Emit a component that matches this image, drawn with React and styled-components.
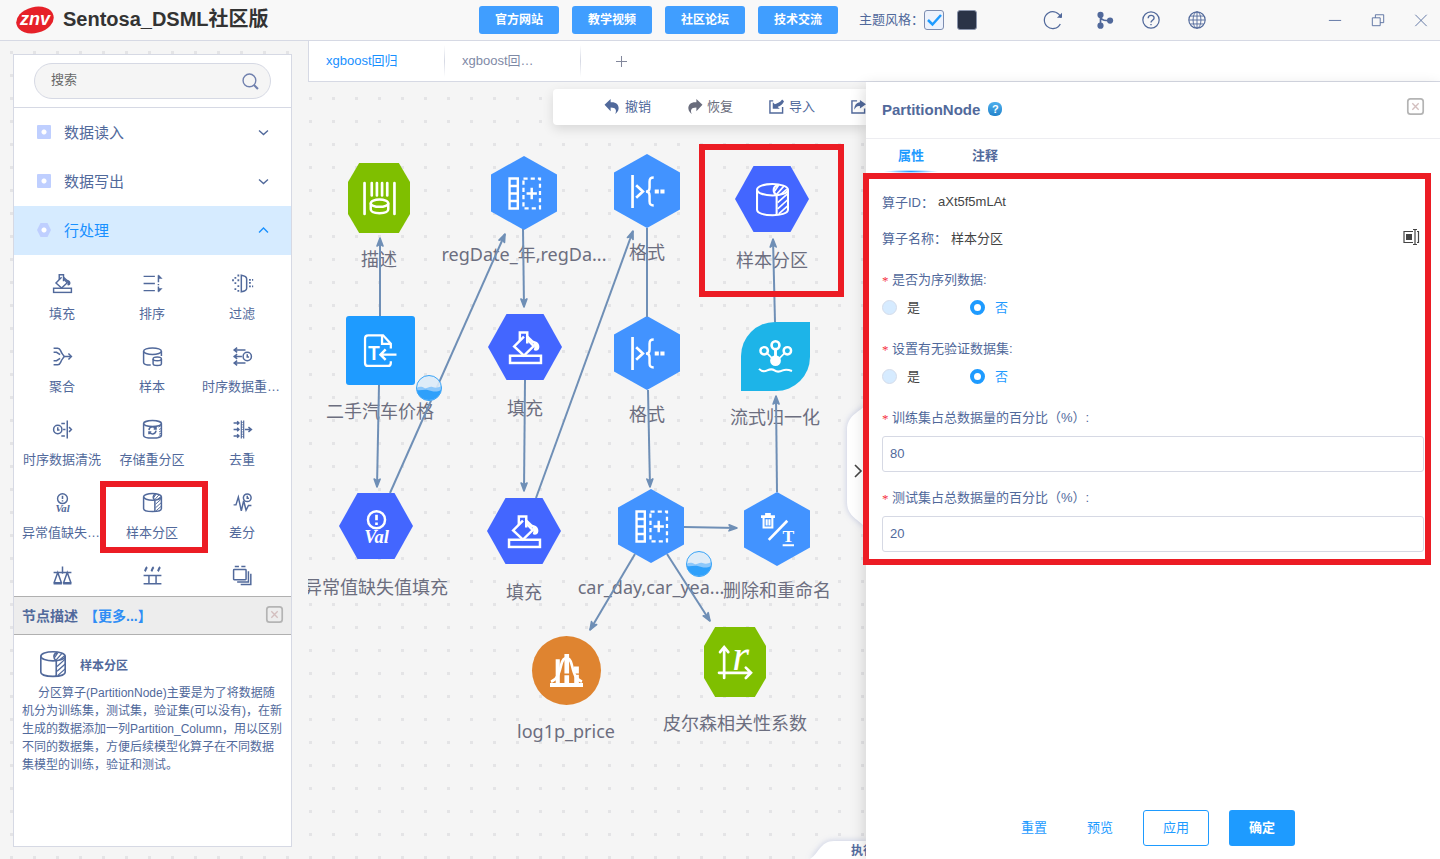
import React, { useState } from "react";
import styled, { createGlobalStyle, css } from "styled-components";

const colors = {
  text: "#51699b",
  primary: "#1e9bff",
  line: "#d6d9e4",
  canvasText: "#6c6e7f",
  mark: "#ec1c24",
  edge: "#6f8fb6",
};

const GlobalStyle = createGlobalStyle`
  * {
    box-sizing: border-box;
  }

  body {
    margin: 0;
    font-family: "Liberation Sans", "Noto Sans CJK SC", sans-serif;
    font-size: 13px;
    color: ${colors.text};
  }

  button,
  input {
    font-family: inherit;
    font-size: inherit;
    color: inherit;
  }

  button {
    padding: 0;
    border: none;
    background: none;
    cursor: pointer;
  }
`;

/* ---------- Icons ---------- */

const Glyph = styled.svg`
  display: block;
  flex: none;
  width: ${(p) => p.$size}px;
  height: ${(p) => p.$size}px;
  fill: none;
  stroke: currentColor;
  stroke-width: ${(p) => (p.$size === 19 ? 2.5 : 2)};
  overflow: visible;

  .solid {
    fill: currentColor;
    stroke: none;
  }

  text {
    fill: currentColor;
    stroke: none;
    font-family: "Liberation Serif", serif;
  }
`;

const glyphs = {
  fill: (
    <>
      <rect x="1" y="24" width="30" height="7" strokeWidth="2.4" />
      <path d="M14.5 5.5 5 15l9.5 8.8L24 14.6 17.6 8" strokeWidth="2.4" />
      <path d="M10.5 9.5V1.4h7.2V12" strokeWidth="2.4" />
      <path d="M17.8 5.5 24 11.5" strokeWidth="2.4" />
      <path className="solid" d="M22 9.5c4.5 0 8 2.5 7.4 6.5-.4 3-3.4 4-5.4 2.5 1-2.500 1-5-2-9z" />
    </>
  ),
  sort: (
    <>
      <path d="M1 4h19M1 16h19M1 28h19" />
      <path d="M26 2v12M26 17v2M26 21v9" />
      <path className="solid" d="M26 1l7 7h-7zM26 31l7-7h-7z" />
    </>
  ),
  filter: (
    <>
      <path d="M14 2v28c6-1 9-3 9-6V8c0-3-3-5-9-6z" />
      <path d="M9 1v3M9 9v3M9 19v3M9 27v3M4 5v3M4 14v3M4 24v3M0 9v3M27 10h3M27 15h3M27 21h3M32 10h2M32 21h2" strokeWidth="3" />
    </>
  ),
  merge: (
    <>
      <path d="M1 2h7c5 0 4 5 8 10l3 4h11M1 30h7c5 0 4-5 8-10l3-4M1 9h5l6 4M1 23h5l6-4" />
      <path d="M26 11l5 5-5 5" />
    </>
  ),
  sample: (
    <>
      <ellipse cx="16" cy="7" rx="15" ry="5.5" />
      <path d="M1 7v19c0 3 5 4.500 12 4.500M31 7v8" />
      <ellipse cx="24" cy="20" rx="7" ry="3" />
      <path d="M17 20v8c0 4 14 4 14 0v-8" />
    </>
  ),
  timeResample: (
    <>
      <path d="M1 5h20M1 16h14M1 27h20M7 1 2 5l5 4M7 12l-5 4 5 4M7 23l-5 4 5 4" />
      <circle cx="24" cy="16" r="7" />
      <path d="M24 12v5h3" />
    </>
  ),
  timeClean: (
    <>
      <circle cx="8" cy="16" r="7" />
      <path d="M8 12v5h3M14 6h6M17 16h4M14 27h6M24 1v30M27 12l4 4-4 4" />
    </>
  ),
  repartition: (
    <>
      <ellipse cx="16" cy="6" rx="15" ry="5" />
      <path d="M1 6v20c0 6 30 6 30 0V6" />
      <path d="M10 17c1-7 9-7 12-2M22 18c-1 7-9 7-12 2M22 11v4h-4M10 24v-4h4" />
      <path d="M26 12l5-3M27 16l4-2M27 20l4-2M27 24l4-2M26 28l5-3" strokeWidth="1.5" />
    </>
  ),
  dedupe: (
    <>
      <path d="M1 5h9M1 16h9M1 27h9M7 2l3 3-3 3M7 13l3 3-3 3M7 24l3 3-3 3" />
      <path d="M14 1v30M18 1v30" strokeWidth="2" />
      <path d="M14 4h4M14 8h4M14 12h4M14 16h4M14 20h4M14 24h4M14 28h4" strokeWidth="1.2" />
      <path d="M20 16h11M26 12l5 4-5 4" />
    </>
  ),
  val: (
    <>
      <circle cx="16" cy="9.5" r="8.300" strokeWidth="2.400" />
      <path d="M16 4.500v5.500M16 12v2.500" strokeWidth="2.600" />
      <text x="16" y="32" fontSize="18" fontStyle="italic" fontWeight="bold" textAnchor="middle">Val</text>
    </>
  ),
  partition: (
    <>
      <ellipse cx="16" cy="6.5" rx="15" ry="5.6" />
      <path d="M1 6.500v19.500c0 7 30 7 30 0V6.500M20 12v19" />
      <path d="M20 12C16 9 16 4 21 2" />
      <path d="M18 8l4-6M20 11l7-8M21 19l10-9M21 25l10-9M22 30l9-8M24 11l6-5" strokeWidth="1.6" />
    </>
  ),
  diff: (
    <>
      <path d="M1 20h4l4-13 5 23 4-17 4 16 4-8h5" />
      <circle cx="24" cy="8" r="6.5" />
      <path d="M24 4.500V9h3" />
    </>
  ),
  balance: <path d="M16 1v12M1 11h30M8 11 2 28h12zM24 11l-6 17h12zM1 30h14M17 30h14" />,
  split: (
    <>
      <path d="M1 16h30M1 30h30M10 16v14M22 16v14" />
      <path d="M3 9c2-2 1-5 4-7M14 9c2-2 1-5 4-7M25 9c2-2 1-5 4-7" strokeWidth="3.6" />
    </>
  ),
  stack: (
    <>
      <rect x="1" y="6" width="21" height="17" rx="1" />
      <path d="M26 9v18H7M30 13v18H13M3 1h7M14 1h7" />
    </>
  ),
  describe: (
    <>
      <path d="M1.5 1v30M30.5 1v30M8.500 1v12M13.500 1v12M18.500 1v12M23.500 1v12" strokeWidth="2.600" strokeLinecap="round" />
      <ellipse cx="16" cy="20.5" rx="8.5" ry="3.6" strokeWidth="2.4" />
      <path d="M7.500 20.500v6c0 5 17 5 17 0v-6" strokeWidth="2.4" />
    </>
  ),
  columns: (
    <>
      <path d="M1.500 1.500h8v29h-8zM1.500 8.700h8M1.500 16h8M1.500 23.300h8" strokeWidth="2.300" />
      <rect x="15" y="1.5" width="16" height="29" strokeWidth="2.2" strokeDasharray="4 3" />
      <path d="M18 16h10M23 10.500v11" strokeWidth="2.400" />
    </>
  ),
  format: (
    <>
      <path d="M1.500 0v32" strokeWidth="2.6" />
      <path d="M5 10l6.500 6L5 22" strokeWidth="2.6" />
      <path d="M22 2.500c-3.500 0-4 1.500-4 4V12c0 2.500-1 4-3.500 4 2.500 0 3.500 1.500 3.500 4v5.500c0 2.500.5 4 4 4" strokeWidth="2.4" />
      <path className="solid" d="M23 14h4v4h-4zM28.500 14h4v4h-4z" />
    </>
  ),
  textFile: (
    <>
      <path d="M26 14V9.500L18.500 1.300H4c-2 0-3 1-3 3V28c0 2 1 3 3 3h19c2 0 3-1 3-3v-1.500" strokeWidth="2.2" />
      <path d="M17.500 1.500V9.500H26" strokeWidth="2.2" />
      <path d="M31.500 20H16.500M21 15l-5 5 5 5" strokeWidth="2.4" />
      <text x="9.5" y="25" fontSize="19" textAnchor="middle" fontWeight="bold" style={{ fontFamily: "Lato" }}>T</text>
    </>
  ),
  stream: (
    <>
      <circle cx="5" cy="10.5" r="3.6" strokeWidth="2.4" />
      <circle cx="16" cy="5" r="3.8" strokeWidth="2.6" />
      <circle cx="27.5" cy="10.5" r="3.6" strokeWidth="2.4" />
      <path d="M8 13l5 5M24.500 13l-5 5" strokeWidth="1.6" />
      <path d="M16 9v9" strokeWidth="2.8" />
      <circle className="solid" cx="16" cy="20" r="5.2" />
      <path d="M0 28c3 3 5 3 8 1.500s5-1.500 7 0 5 1.500 8 0 5-1 9 .5" strokeWidth="2" />
    </>
  ),
  rename: (
    <>
      <path d="M0 3.500h13.500M4 1.200h5.500" strokeWidth="2.600" />
      <path d="M2.500 4v10h8.500V4M5.500 6v6M8.200 6v6" strokeWidth="2" />
      <path d="M7.500 26 25.500 7.500" strokeWidth="2.6" />
      <text x="26.5" y="28.5" fontSize="17" fontWeight="bold" textAnchor="middle">T</text>
      <path d="M21 31.300h11" strokeWidth="2" />
    </>
  ),
  histogram: (
    <>
      <path d="M0 30h32" strokeWidth="4" />
      <path className="solid" d="M5.500 5h4v24h-4zM14 0h4.500v19H14zM14 20.500h4.500V29H14zM23 12h5v7h-5zM23.500 20h4.500v9h-4.500z" />
      <path d="M1 27c7-3 8-9 10-17 1-4 2.500-6 5-6s4 2 5 6c2 8 3 14 10 17" strokeWidth="2.6" />
    </>
  ),
  pearson: (
    <>
      <path d="M5 31V2M0 26h31M1 6l4-5 4 5M26 21l5 5-5 5" strokeWidth="2.6" strokeLinecap="round" />
      <text x="21" y="23" fontSize="42" fontStyle="italic" textAnchor="middle">r</text>
    </>
  ),
  undo: <path className="solid" d="M12 0v7c11-1 18 5 17 14-.5 5-4 9-7 11 3-8 2-14-10-14v8L-1 12z" />,
  redo: <path className="solid" d="M20 0v7C9 6 2 12 3 21c.5 5 4 9 7 11-3-8-2-14 10-14v8l13-14z" />,
  importFile: (
    <>
      <path d="M9 4H2v26h27V17" strokeWidth="3" />
      <path className="solid" d="M8 21V7l4.500 4C17 9 25 7 28 1l4 4c-3 8-9 10-13.500 12L23 21z" />
    </>
  ),
  exportFile: (
    <>
      <path d="M13 4H2v26h27V20" strokeWidth="3" />
      <path className="solid" d="M19 2l13 9-13 9v-5c-6-1-9 3-12 8 0-9 4-15 12-16z" />
    </>
  ),
  search: (
    <>
      <circle cx="14" cy="14" r="12" strokeWidth="2.6" />
      <path d="M22.500 22.500 30 30" strokeWidth="4" />
    </>
  ),
  refresh: (
    <>
      <path d="M30 12A15 15 0 1 0 29 23" strokeWidth="2.2" />
      <path className="solid" d="M32 3v9H23z" />
    </>
  ),
  branch: (
    <>
      <g className="solid">
        <circle cx="8" cy="7" r="5.5" />
        <circle cx="8" cy="26" r="5.5" />
        <circle cx="25" cy="17" r="5.5" />
      </g>
      <path d="M8 7v19M8 12c3 5 8 5 17 5" strokeWidth="3" />
    </>
  ),
  help: (
    <>
      <circle cx="16" cy="16" r="14.5" strokeWidth="2.2" />
      <path d="M11 13c0-7 10.500-7 10.500-.5 0 4-5.500 4-5.500 8M16 23v2.500" strokeWidth="2.4" />
    </>
  ),
  globe: (
    <>
      <circle cx="16" cy="16" r="14.5" />
      <ellipse cx="16" cy="16" rx="7" ry="14.5" strokeWidth="1.6" />
      <path d="M16 1.500v29M1.500 16h29M4 9h24M4 23h24" strokeWidth="1.6" />
    </>
  ),
  minimize: <path d="M2 17h28" />,
  restore: <path d="M3 11h18v18H3zM10 11V4h19v18h-8" />,
  close: <path d="M3 4l26 26M29 4 3 30" />,
  boxClose: (
    <>
      <rect x="1.5" y="1.5" width="29" height="29" rx="5" stroke="#b4b4b4" strokeWidth="3.2" />
      <path d="M10 10l12 12M22 10 10 22" stroke="#d3bfbf" strokeWidth="2.6" />
    </>
  ),
  down: <path d="M3 10l13 12 13-12" strokeWidth="4" />,
  up: <path d="M3 22 16 9l13 13" strokeWidth="4" />,
  plus: <path d="M0 16h32M16 0v32" strokeWidth="3" />,
  check: <path d="M4 16l9 9L30 6" strokeWidth="5" />,
  edit: (
    <>
      <path d="M20 5H2v22h18M28 5h3v22h-3M20 1h8M24 1v30M20 31h8" strokeWidth="2.4" />
      <path className="solid" d="M6 10h12v12H6z" />
    </>
  ),
};

const Icon = ({ name, size = 20 }) => (
  <Glyph viewBox="0 0 32 32" $size={size} aria-hidden="true">
    {glyphs[name]}
  </Glyph>
);

const Logo = () => (
  <svg width="38" height="30" viewBox="0 0 38 30" role="img" aria-label="znv">
    <ellipse cx="19" cy="15" rx="19" ry="13" fill="#e62129" transform="rotate(-14 19 15)" />
    <text x="19" y="20" fill="#fff" fontFamily="Liberation Sans" fontSize="18" fontWeight="bold" fontStyle="italic" textAnchor="middle">
      znv
    </text>
  </svg>
);

/* ---------- Header ---------- */

const Page = styled.div`
  display: flex;
  flex-direction: column;
  height: 100vh;
  overflow: hidden;
`;

const Header = styled.header`
  display: flex;
  align-items: center;
  flex: none;
  height: 41px;
  padding: 0 12px 0 16px;
  background: #f8f8f8;
  border-bottom: 1px solid ${colors.line};
`;

const Brand = styled.div`
  display: flex;
  align-items: center;
  gap: 9px;
  flex: 0 0 463px;
`;

const BrandName = styled.h1`
  margin: 0;
  padding-bottom: 2px;
  font-size: 20px;
  line-height: 24px;
  color: #333;
`;

const HeaderNav = styled.nav`
  display: flex;
  gap: 13px;
`;

const HeaderLink = styled.a`
  width: 80px;
  border-radius: 3px;
  background: #409eff;
  color: #fff;
  font-size: 12px;
  font-weight: bold;
  line-height: 28px;
  text-align: center;
  text-decoration: none;
`;

const ThemePicker = styled.div`
  display: flex;
  align-items: center;
  margin-left: 21px;

  > span {
    padding-bottom: 3px;
  }
`;

const Swatch = styled.label`
  display: grid;
  place-items: center;
  margin-right: 13px;
  color: ${colors.primary};

  input {
    grid-area: 1 / 1;
    appearance: none;
    width: 20px;
    height: 20px;
    margin: 0;
    border: 1px solid ${(p) => (p.$dark ? "#8a94ab" : "#7d8db0")};
    border-radius: 3px;
    background: ${(p) => (p.$dark ? "#2a3347" : "#edf2fc")};
  }

  svg {
    grid-area: 1 / 1;
    pointer-events: none;
  }
`;

const Tools = styled.div`
  display: flex;
  align-items: center;
  gap: 28px;
  margin-left: ${(p) => (p.$end ? "auto" : "34px")};
`;

const WindowControls = styled.div`
  display: flex;
  align-items: center;
  gap: 29px;
  margin-left: 122px;
`;

/* ---------- Workspace ---------- */

const Workspace = styled.main`
  display: flex;
  flex: 1;
  min-height: 0;
  background: #f5f5f5 radial-gradient(circle, #e4e4e6 1px, #e4e4e6 1.5px, transparent 2px) 0 0 / 23px 23px;
`;

const Sidebar = styled.aside`
  display: flex;
  flex-direction: column;
  flex: 0 0 279px;
  margin: 13px 16px 12px 13px;
  border: 1px solid ${colors.line};
  background: #fff;
`;

const SearchArea = styled.div`
  padding: 8px 20px;
  border-bottom: 1px solid ${colors.line};
`;

const SearchBox = styled.label`
  display: flex;
  align-items: center;
  height: 36px;
  padding: 0 11px 0 16px;
  border: 1px solid ${colors.line};
  border-radius: 18px;
  background: #f5f5f5;
  color: #7080ae;

  input {
    flex: 1;
    min-width: 0;
    padding: 0 0 3px;
    border: none;
    outline: none;
    background: none;
  }

  input::placeholder {
    color: #686868;
    opacity: 1;
  }
`;

const Category = styled.button`
  display: flex;
  align-items: center;
  gap: 13px;
  flex: none;
  width: 100%;
  height: 49px;
  padding: 0 22px 1px 23px;
  font-size: 15px;
  color: ${(p) => (p.$open ? "#1890ff" : colors.text)};
  background: ${(p) => (p.$open ? "#d6ebff" : "#fff")};

  span {
    flex: 1;
    padding-bottom: 2px;
    text-align: left;
  }
`;

const CategoryMark = styled.i`
  width: 14px;
  height: 14px;
  border-radius: 1px;
  background: radial-gradient(circle, #fff 2px, #bfcfff 3px);
  clip-path: ${(p) => (p.$hex ? "polygon(25% 0, 75% 0, 100% 50%, 75% 100%, 25% 100%, 0 50%)" : "none")};
`;

const Operators = styled.div`
  display: grid;
  grid-template-columns: repeat(3, 1fr);
  grid-auto-rows: 49px;
  row-gap: 24px;
  flex: 1;
  min-height: 0;
  padding: 19px 4px 0 3px;
  overflow: hidden;
`;

const Operator = styled.button`
  display: flex;
  flex-direction: column;
  align-items: center;
  gap: 12px;
  position: relative;

  span {
    max-width: 80px;
    overflow: hidden;
    line-height: 18px;
    text-overflow: ellipsis;
    white-space: nowrap;
  }

  ${(p) =>
    p.$marked &&
    css`
      &::after {
        content: "";
        position: absolute;
        inset: -12px -11px -11px -7px;
        border: 6px solid ${colors.mark};
      }
    `}
`;

const Description = styled.section`
  flex: 0 0 250px;
`;

const DescriptionHead = styled.div`
  display: flex;
  align-items: center;
  gap: 6px;
  height: 39px;
  padding: 0 8px 2px;
  border: solid #b0b0b0;
  border-width: 1px 0;
  background: #ededed;
  font-size: 14px;
  font-weight: bold;

  a {
    flex: 1;
    color: #2f8df5;
    text-decoration: none;
  }
`;

const DescriptionTitle = styled.h2`
  display: flex;
  align-items: center;
  gap: 14px;
  height: 26px;
  margin: 16px 0 7px 26px;
  font-size: 12px;
`;

const DescriptionText = styled.p`
  margin: 0;
  padding: 0 8px;
  font-size: 12px;
  line-height: 18px;
  text-indent: 16px;
`;

const Content = styled.div`
  display: flex;
  flex-direction: column;
  flex: 1;
  min-width: 0;
`;

const TabBar = styled.nav`
  display: flex;
  flex: none;
  height: 41px;
  border: solid ${colors.line};
  border-width: 0 0 1px 1px;
  background: #fff;
`;

const FlowTab = styled.button`
  width: 136px;
  padding: 0 43px 3px 17px;
  color: ${(p) => (p.$active ? "#1890ff" : "#7f8aa6")};
  background: linear-gradient(transparent, ${colors.line}, transparent) right 4px / 1px 32px no-repeat;
  overflow: hidden;
  text-align: left;
  text-overflow: ellipsis;
  white-space: nowrap;
`;

const AddTab = styled.button`
  display: grid;
  place-items: center;
  width: 81px;
  color: #82879b;
`;

const Split = styled.div`
  display: flex;
  flex: 1;
  min-height: 0;
`;

/* ---------- Canvas ---------- */

const Canvas = styled.section`
  position: relative;
  flex: 1;
  min-width: 0;
  overflow: hidden;
`;

const Toolbar = styled.div`
  position: absolute;
  top: 7px;
  right: 0;
  left: 245px;
  display: flex;
  gap: 36px;
  height: 36px;
  padding: 0 0 2px 52px;
  border-radius: 4px 0 0 4px;
  background: #fff;
  box-shadow: 0 4px 12px rgba(0, 0, 0, 0.12);
`;

const ToolbarButton = styled.button`
  display: flex;
  align-items: center;
  gap: 5px;
  flex: none;
  color: ${(p) => (p.$muted ? "#696c7c" : colors.text)};

  span {
    padding-bottom: 2px;
  }
`;

const Edges = styled.svg`
  position: absolute;
  inset: 0;
  width: 100%;
  height: 100%;
  pointer-events: none;
`;

const shapes = {
  octagon: css`
    width: 62px;
    height: 70px;
    background: #7fbf00;
    clip-path: polygon(18% 0, 82% 0, 100% 27%, 100% 73%, 82% 100%, 18% 100%, 0 73%, 0 27%);
  `,
  pointy: css`
    width: 66px;
    height: 74px;
    background: #4293ff;
    clip-path: polygon(50% 0, 100% 25%, 100% 75%, 50% 100%, 0 75%, 0 25%);
  `,
  flat: css`
    width: 74px;
    height: 66px;
    background: #4366ff;
    clip-path: polygon(25% 0, 75% 0, 100% 50%, 75% 100%, 25% 100%, 0 50%);
  `,
  square: css`
    width: 69px;
    height: 69px;
    border-radius: 3px;
    background: #1e9bff;
  `,
  leaf: css`
    width: 69px;
    height: 69px;
    border-radius: 34px 0 34px 0;
    background: #1db4e8;
  `,
  circle: css`
    width: 69px;
    height: 69px;
    border-radius: 50%;
    background: #df8430;
  `,
};

const NodeBox = styled.div`
  position: absolute;
  top: ${(p) => p.$y}px;
  left: ${(p) => p.$x}px;
  display: flex;
  flex-direction: column;
  align-items: center;
  width: 0;
  transform: translateY(-37px);
  color: ${colors.canvasText};
  font-family: "Noto Sans", "Noto Sans CJK SC", sans-serif;
  font-size: 18px;
  line-height: 26px;
  white-space: nowrap;
`;

const NodeFace = styled.div`
  display: grid;
  place-items: center;
  height: 74px;
  margin-bottom: 11px;
`;

const NodeShape = styled.div`
  display: grid;
  place-items: center;
  color: #fff;
  ${(p) => shapes[p.$shape]}
`;

const Mark = styled.div`
  position: absolute;
  top: 62px;
  left: 391px;
  width: 145px;
  height: 153px;
  border: 6px solid ${colors.mark};
`;

const PanelHandle = styled.button`
  position: absolute;
  top: 321px;
  right: 0;
  width: 19px;
  height: 130px;

  svg {
    display: block;
    overflow: visible;
    filter: drop-shadow(0 0 3px rgba(80, 100, 180, 0.3));
  }
`;

const RunTab = styled.div`
  position: absolute;
  right: 0;
  bottom: 0;
  display: grid;
  width: 56px;
  height: 18px;
  overflow: visible;
  font-size: 12px;
  font-weight: bold;

  svg {
    grid-area: 1 / 1;
    filter: drop-shadow(0 0 3px rgba(80, 100, 180, 0.3));
  }

  span {
    grid-area: 1 / 1;
    z-index: 1;
    padding-left: 41px;
    line-height: 21px;
    white-space: nowrap;
  }
`;

// node centres, measured from the canvas corner
const nodes = [
  { x: 71, y: 116, shape: "octagon", icon: "describe", label: "描述" },
  { x: 216, y: 111, shape: "pointy", icon: "columns", label: "regDate_年,regDa..." },
  { x: 339, y: 109, shape: "pointy", icon: "format", label: "格式" },
  { x: 464, y: 117, shape: "flat", icon: "partition", label: "样本分区" },
  { x: 72, y: 268, shape: "square", icon: "textFile", label: "二手汽车价格" },
  { x: 217, y: 265, shape: "flat", icon: "fill", label: "填充" },
  { x: 339, y: 271, shape: "pointy", icon: "format", label: "格式" },
  { x: 467, y: 274, shape: "leaf", icon: "stream", label: "流式归一化" },
  { x: 68, y: 444, shape: "flat", icon: "val", label: "异常值缺失值填充" },
  { x: 216, y: 449, shape: "flat", icon: "fill", label: "填充" },
  { x: 343, y: 444, shape: "pointy", icon: "columns", label: "car_day,car_yea..." },
  { x: 469, y: 447, shape: "pointy", icon: "rename", label: "删除和重命名" },
  { x: 258, y: 588, shape: "circle", icon: "histogram", label: "log1p_price" },
  { x: 427, y: 580, shape: "octagon", icon: "pearson", label: "皮尔森相关性系数" },
];

const edges = [
  [72, 234, 72, 156],
  [71, 303, 69, 405],
  [82, 411, 197, 152],
  [215, 147, 216, 225],
  [217, 298, 216, 409],
  [228, 416, 325, 149],
  [340, 308, 342, 405],
  [376, 445, 429, 446],
  [327, 472, 282, 548],
  [359, 472, 402, 539],
  [469, 410, 468, 314],
  [467, 240, 465, 157],
];

const waves = [
  [121, 306],
  [391, 482],
];

const FlowCanvas = () => (
  <Canvas>
    {nodes.map((n, i) => (
      <NodeBox key={i} $x={n.x} $y={n.y}>
        <NodeFace>
          <NodeShape $shape={n.shape}>
            <Icon name={n.icon} size={33} />
          </NodeShape>
        </NodeFace>
        {n.label}
      </NodeBox>
    ))}
    <Edges aria-hidden="true">
      <defs>
        <marker id="arrow" viewBox="0 0 12 10" refX="10" refY="5" markerWidth="12" markerHeight="10" markerUnits="userSpaceOnUse" orient="auto">
          <path d="M2 2l8 3-8 3 2-3z" fill={colors.edge} stroke={colors.edge} strokeWidth="1.6" strokeLinejoin="round" />
        </marker>
      </defs>
      <g stroke={colors.edge} strokeWidth="2">
        <path d="M339 146v89" />
        {edges.map(([x1, y1, x2, y2], i) => (
          <line key={i} x1={x1} y1={y1} x2={x2} y2={y2} markerEnd="url(#arrow)" />
        ))}
      </g>
      {waves.map(([x, y]) => (
        <g key={x} transform={`translate(${x} ${y})`}>
          <circle r="12.5" fill="#dcebf8" fillOpacity=".9" />
          <path d="M-12.500 0c3-2 6-1 8 0s5-2 8-1 5 1 9-1a12.500 12.500 0 0 1-25 4z" fill="#8cc8fb" />
          <path d="M-12.300 2c4 1 7-1 11 0s8 3 13.500 0a12.500 12.500 0 0 1-24.500 0z" fill="#2ea0fb" />
          <circle r="12.5" fill="none" stroke="#3aa4f7" />
        </g>
      ))}
    </Edges>
    <Mark />
    <Toolbar>
      <ToolbarButton><Icon name="undo" size={15} /><span>撤销</span></ToolbarButton>
      <ToolbarButton $muted><Icon name="redo" size={15} /><span>恢复</span></ToolbarButton>
      <ToolbarButton><Icon name="importFile" size={15} /><span>导入</span></ToolbarButton>
      <ToolbarButton aria-label="导出"><Icon name="exportFile" size={15} /></ToolbarButton>
    </Toolbar>
    <PanelHandle aria-label="收起">
      <svg width="19" height="130" viewBox="0 0 19 130">
        <path d="M19 0C17 8 0 10 0 27v72c0 17 17 19 19 28z" fill="#fff" />
        <path d="M8 62l6 6-6 6" fill="none" stroke="#444" strokeWidth="1.6" />
      </svg>
    </PanelHandle>
    <RunTab>
      <svg width="56" height="18" viewBox="0 0 56 18">
        <path d="M0 18C8 14 10 0 24 0h32v18z" fill="#fff" />
      </svg>
      <span>执行</span>
    </RunTab>
  </Canvas>
);

/* ---------- Property panel ---------- */

const Panel = styled.form`
  position: relative;
  display: flex;
  flex-direction: column;
  flex: 0 0 574px;
  background: #fff;
  box-shadow: -2px 4px 14px rgba(0, 0, 0, 0.14);
`;

const PanelHead = styled.div`
  display: flex;
  align-items: center;
  gap: 8px;
  height: 57px;
  padding: 0 16px 2px;
  border-bottom: 1px solid #ededf1;

  h2 {
    margin: 0;
    font-size: 15px;
  }
`;

const HelpBadge = styled.button`
  width: 14px;
  height: 14px;
  border-radius: 6px;
  background: linear-gradient(#4fb0ee, #2283cb);
  color: #fff;
  font-size: 11px;
  font-weight: bold;
  line-height: 14px;
`;

const PanelClose = styled.button`
  margin: 0 0 6px auto;
`;

const PanelTabs = styled.div`
  display: flex;
  height: 34px;
  padding-left: 8px;
`;

const PanelTab = styled.button`
  width: 74px;
  padding-bottom: 3px;
  font-weight: bold;
  color: ${(p) => (p.$active ? colors.primary : colors.text)};
  background: ${(p) =>
    p.$active
      ? `radial-gradient(closest-side, ${colors.primary}, transparent) center 31px / 54px 3px no-repeat`
      : "none"};
`;

const FormBody = styled.div`
  position: relative;
  padding: 10px 16px 13px;

  &::after {
    content: "";
    position: absolute;
    inset: 0 9px 0 -3px;
    border: 6px solid ${colors.mark};
    pointer-events: none;
  }
`;

const InfoRow = styled.div`
  display: flex;
  align-items: center;
  gap: 4px;
  height: 36px;

  output {
    flex: 1;
    color: #444;
  }

  button {
    margin-right: 5px;
    color: #444;
  }
`;

const Field = styled.fieldset`
  margin: 0;
  padding: ${(p) => (p.$radio ? "0 0 24px" : "0 0 17px")};
  border: none;

  &:first-of-type {
    margin-top: 16px;
  }

  &:last-of-type {
    padding-bottom: 0;
  }
`;

const FieldLabel = styled.label`
  display: block;
  margin-bottom: 9px;
  padding: 0;
  line-height: 18px;

  &::before {
    content: "*";
    display: inline-block;
    width: 10px;
    color: #f5333f;
    font-family: "Liberation Serif", serif;
    vertical-align: -1px;
    line-height: 1;
  }
`;

const Options = styled.div`
  display: flex;
  height: 18px;
`;

const Option = styled.label`
  display: flex;
  align-items: center;
  gap: 10px;
  width: 88px;
  color: ${(p) => (p.$on ? colors.primary : "#444")};

  input {
    appearance: none;
    width: 15px;
    height: 15px;
    margin: 0;
    border: 1px solid #d5dcea;
    border-radius: 50%;
    background: #d6ebff;
  }

  input:checked {
    border: 4px solid ${colors.primary};
    background: #fff;
  }

  span {
    padding-bottom: 2px;
  }
`;

const TextInput = styled.input`
  display: block;
  width: 100%;
  height: 36px;
  padding: 0 7px 1px;
  border: 1px solid ${colors.line};
  border-radius: 3px;
  outline: none;
`;

const PanelFoot = styled.div`
  display: flex;
  justify-content: center;
  margin-top: auto;
  padding: 0 10px 13px 0;
`;

const FootButton = styled.button`
  width: 66px;
  height: 36px;
  padding-bottom: 3px;
  border-radius: 3px;
  color: ${colors.primary};

  ${(p) =>
    p.$outlined &&
    css`
      margin: 0 20px 0 10px;
      border: 1px solid ${colors.primary};
    `}

  ${(p) =>
    p.$filled &&
    css`
      background: ${colors.primary};
      color: #fff;
      font-weight: bold;
    `}
`;

const RadioField = ({ name, title }) => {
  const [value, setValue] = useState("否");
  return (
    <Field $radio>
      <FieldLabel as="legend">{title}</FieldLabel>
      <Options>
        {["是", "否"].map((option) => (
          <Option key={option} $on={value === option}>
            <input type="radio" name={name} checked={value === option} onChange={() => setValue(option)} />
            <span>{option}</span>
          </Option>
        ))}
      </Options>
    </Field>
  );
};

const NumberField = ({ id, title, value }) => (
  <Field>
    <FieldLabel htmlFor={id}>{title}</FieldLabel>
    <TextInput id={id} defaultValue={value} />
  </Field>
);

const PropertyPanel = () => (
  <Panel onSubmit={(e) => e.preventDefault()}>
    <PanelHead>
      <h2>PartitionNode</h2>
      <HelpBadge type="button">?</HelpBadge>
      <PanelClose type="button" aria-label="关闭">
        <Icon name="boxClose" size={17} />
      </PanelClose>
    </PanelHead>
    <PanelTabs>
      <PanelTab type="button" $active>属性</PanelTab>
      <PanelTab type="button">注释</PanelTab>
    </PanelTabs>
    <FormBody>
      <InfoRow>
        算子ID：<output>aXt5f5mLAt</output>
      </InfoRow>
      <InfoRow>
        算子名称：<output>样本分区</output>
        <button type="button" aria-label="重命名">
          <Icon name="edit" size={16} />
        </button>
      </InfoRow>
      <RadioField name="sequence" title="是否为序列数据:" />
      <RadioField name="validation" title="设置有无验证数据集:" />
      <NumberField id="train" title="训练集占总数据量的百分比（%）:" value="80" />
      <NumberField id="test" title="测试集占总数据量的百分比（%）:" value="20" />
    </FormBody>
    <PanelFoot>
      <FootButton type="reset">重置</FootButton>
      <FootButton type="button">预览</FootButton>
      <FootButton type="button" $outlined>应用</FootButton>
      <FootButton type="submit" $filled>确定</FootButton>
    </PanelFoot>
  </Panel>
);

/* ---------- Sidebar ---------- */

const operators = [
  ["fill", "填充"],
  ["sort", "排序"],
  ["filter", "过滤"],
  ["merge", "聚合"],
  ["sample", "样本"],
  ["timeResample", "时序数据重采样"],
  ["timeClean", "时序数据清洗"],
  ["repartition", "存储重分区"],
  ["dedupe", "去重"],
  ["val", "异常值缺失值填充"],
  ["partition", "样本分区"],
  ["diff", "差分"],
  ["balance"],
  ["split"],
  ["stack"],
];

const OperatorSidebar = () => (
  <Sidebar>
    <SearchArea>
      <SearchBox>
        <input type="text" placeholder="搜索" aria-label="搜索" />
        <Icon name="search" size={17} />
      </SearchBox>
    </SearchArea>
    <Category>
      <CategoryMark />
      <span>数据读入</span>
      <Icon name="down" size={11} />
    </Category>
    <Category>
      <CategoryMark />
      <span>数据写出</span>
      <Icon name="down" size={11} />
    </Category>
    <Category $open>
      <CategoryMark $hex />
      <span>行处理</span>
      <Icon name="up" size={11} />
    </Category>
    <Operators>
      {operators.map(([icon, label]) => (
        <Operator key={icon} $marked={icon === "partition"} aria-label={label || icon}>
          <Icon name={icon} size={19} />
          {label && <span>{label}</span>}
        </Operator>
      ))}
    </Operators>
    <Description>
      <DescriptionHead>
        节点描述<a href="#more">【更多...】</a>
        <button aria-label="关闭">
          <Icon name="boxClose" size={17} />
        </button>
      </DescriptionHead>
      <DescriptionTitle>
        <Icon name="partition" size={26} />
        样本分区
      </DescriptionTitle>
      <DescriptionText>
        分区算子(PartitionNode)主要是为了将数据随机分为训练集，测试集，验证集(可以没有)，在新生成的数据添加一列Partition_Column，用以区别不同的数据集，方便后续模型化算子在不同数据集模型的训练，验证和测试。
      </DescriptionText>
    </Description>
  </Sidebar>
);

function App() {
  return (
    <Page>
      <GlobalStyle />
      <Header>
        <Brand>
          <Logo />
          <BrandName>Sentosa_DSML社区版</BrandName>
        </Brand>
        <HeaderNav>
          <HeaderLink href="#site">官方网站</HeaderLink>
          <HeaderLink href="#video">教学视频</HeaderLink>
          <HeaderLink href="#forum">社区论坛</HeaderLink>
          <HeaderLink href="#tech">技术交流</HeaderLink>
        </HeaderNav>
        <ThemePicker>
          <span>主题风格：</span>
          <Swatch>
            <input type="checkbox" defaultChecked aria-label="浅色" />
            <Icon name="check" size={16} />
          </Swatch>
          <Swatch $dark>
            <input type="checkbox" aria-label="深色" />
          </Swatch>
        </ThemePicker>
        <Tools $end>
          <button aria-label="刷新"><Icon name="refresh" size={18} /></button>
        </Tools>
        <Tools>
          <button aria-label="分支"><Icon name="branch" size={18} /></button>
          <button aria-label="帮助"><Icon name="help" size={18} /></button>
          <button aria-label="语言"><Icon name="globe" size={18} /></button>
        </Tools>
        <WindowControls>
          <button aria-label="最小化"><Icon name="minimize" size={14} /></button>
          <button aria-label="还原"><Icon name="restore" size={14} /></button>
          <button aria-label="关闭窗口"><Icon name="close" size={14} /></button>
        </WindowControls>
      </Header>
      <Workspace>
        <OperatorSidebar />
        <Content>
          <TabBar>
            <FlowTab $active>xgboost回归</FlowTab>
            <FlowTab>xgboost回归1</FlowTab>
            <AddTab aria-label="新建">
              <Icon name="plus" size={11} />
            </AddTab>
          </TabBar>
          <Split>
            <FlowCanvas />
            <PropertyPanel />
          </Split>
        </Content>
      </Workspace>
    </Page>
  );
}

export default App;
